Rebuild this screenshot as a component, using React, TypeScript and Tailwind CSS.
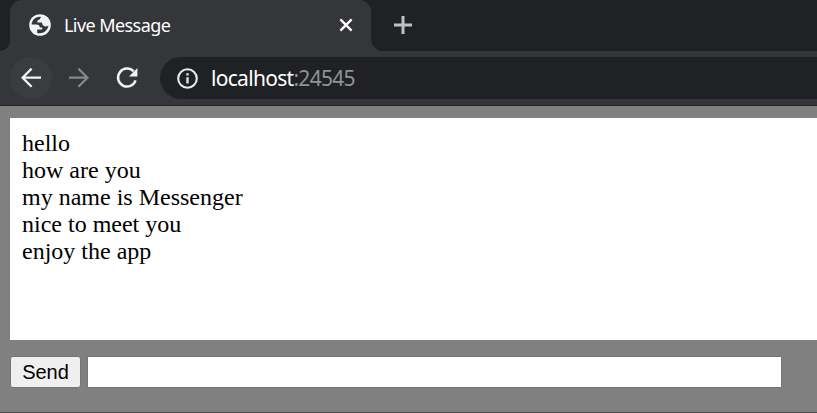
import React from "react";

const messages = [
  "hello",
  "how are you",
  "my name is Messenger",
  "nice to meet you",
  "enjoy the app",
];

function TabStrip() {
  return (
    <div className="flex h-[51px] bg-[#35363a]">
      <div className="w-[10px] rounded-br-[10px] bg-[#202124]" />
      <div className="flex w-[361px] bg-[#202124]">
        <div className="flex w-full items-center rounded-t-[12px] bg-[#35363a] pr-[18px] pb-[1px] pl-[19px]">
          <svg className="size-[22px] shrink-0" viewBox="0 0 22 22">
            <circle cx="11" cy="11" r="10.8" fill="#f1f3f4" />
            <path
              d="M10.6 2.7C6 2.9 2.8 6.4 2.6 10.6H7.4C9.6 10.6 10.8 11.7 10.8 13.4H13.2V15.6H8.2V18.9C13.6 20.4 19 16.6 19.4 11.2C18.7 12 17.8 12.4 16.6 12.4C14.2 12.4 13 11 13 8.6H8.2C8.2 6.4 9 5.8 10.8 5.6C10.8 4.3 11.4 3.5 12.6 2.9Z"
              fill="#35363a"
            />
          </svg>
          <span className="ml-[13px] text-[18px] leading-[24px] tracking-[-0.57px] whitespace-nowrap text-white">
            Live Message
          </span>
          <svg className="ml-auto size-[14px]" viewBox="0 0 14 14">
            <path d="M1.4 1.4 12.6 12.6M12.6 1.4 1.4 12.6" stroke="#fff" strokeWidth="2.3" />
          </svg>
        </div>
      </div>
      <div className="flex flex-1 items-center rounded-bl-[12px] bg-[#202124] pb-[1px] pl-[23px]">
        <svg className="size-[18px]" viewBox="0 0 18 18">
          <path d="M9 0V18M0 9H18" stroke="#bdc1c6" strokeWidth="3" />
        </svg>
      </div>
    </div>
  );
}

function Toolbar() {
  return (
    <div className="flex h-[55px] border-b border-[#242528] bg-[#35363a] pt-[6px] pl-[10px]">
      <div className="flex size-[42px] items-center justify-center rounded-full bg-[#3b3c40]">
        <svg className="size-[20px]" viewBox="0 0 20 20" fill="none" stroke="#f1f3f4" strokeWidth="2.3">
          <path d="M20 9.7H1.8M10.6 .6 1.6 9.7 10.6 18.8" />
        </svg>
      </div>
      <div className="ml-[6px] flex size-[42px] items-center justify-center">
        <svg className="size-[20px]" viewBox="0 0 20 20" fill="none" stroke="#86878a" strokeWidth="2.3">
          <path d="M0 9.7H18.2M9.4 .6 18.4 9.7 9.4 18.8" />
        </svg>
      </div>
      <div className="ml-[6px] flex size-[42px] items-center justify-center">
        <svg className="size-[22px]" viewBox="0 0 22 22">
          <path d="M17.6 4.4A9 9 0 1 0 19.6 13.4" fill="none" stroke="#f1f3f4" strokeWidth="2.5" />
          <path d="M21.4 1V9.4H13Z" fill="#f1f3f4" />
        </svg>
      </div>
      <div className="ml-[12px] flex h-[42px] flex-1 items-center rounded-l-full bg-[#202124] pl-[17px]">
        <svg className="size-[21px]" viewBox="0 0 21 21">
          <circle cx="10.5" cy="10.5" r="9.3" fill="none" stroke="#e8eaed" strokeWidth="2.1" />
          <path d="M10.5 5.2V7.4M10.5 9.2V15.4" stroke="#e8eaed" strokeWidth="2.3" />
        </svg>
        <span className="ml-[13px] text-[21px] leading-[28px] tracking-[-0.7px] whitespace-nowrap text-white">
          localhost<span className="text-[#8f9194]">:24545</span>
        </span>
      </div>
    </div>
  );
}

export default function App() {
  return (
    <div className="h-[413px] w-[817px] overflow-hidden bg-[#808080]">
      <header className="font-['Noto_Sans','Open_Sans',sans-serif]">
        <TabStrip />
        <Toolbar />
      </header>
      <main className="h-[307px] border-b border-[#505050] pt-[12px] pl-[10px]">
        <div className="h-[222px] bg-white pt-[12px] pl-[12px] font-['Liberation_Serif',serif] text-[24px] leading-[27px] text-black">
          {messages.map((message) => (
            <div key={message}>{message}</div>
          ))}
        </div>
        <form className="mt-[16px] flex font-['Liberation_Sans',sans-serif]" onSubmit={(e) => e.preventDefault()}>
          <button className="h-[32px] w-[71px] rounded-[3px] border border-[#767676] bg-[#efefef] text-[20px] leading-[30px] text-black">
            Send
          </button>
          <input
            type="text"
            aria-label="Message"
            className="ml-[6px] h-[32px] w-[695px] border border-[#767676] bg-white px-1 text-[20px] outline-none"
          />
        </form>
      </main>
    </div>
  );
}
